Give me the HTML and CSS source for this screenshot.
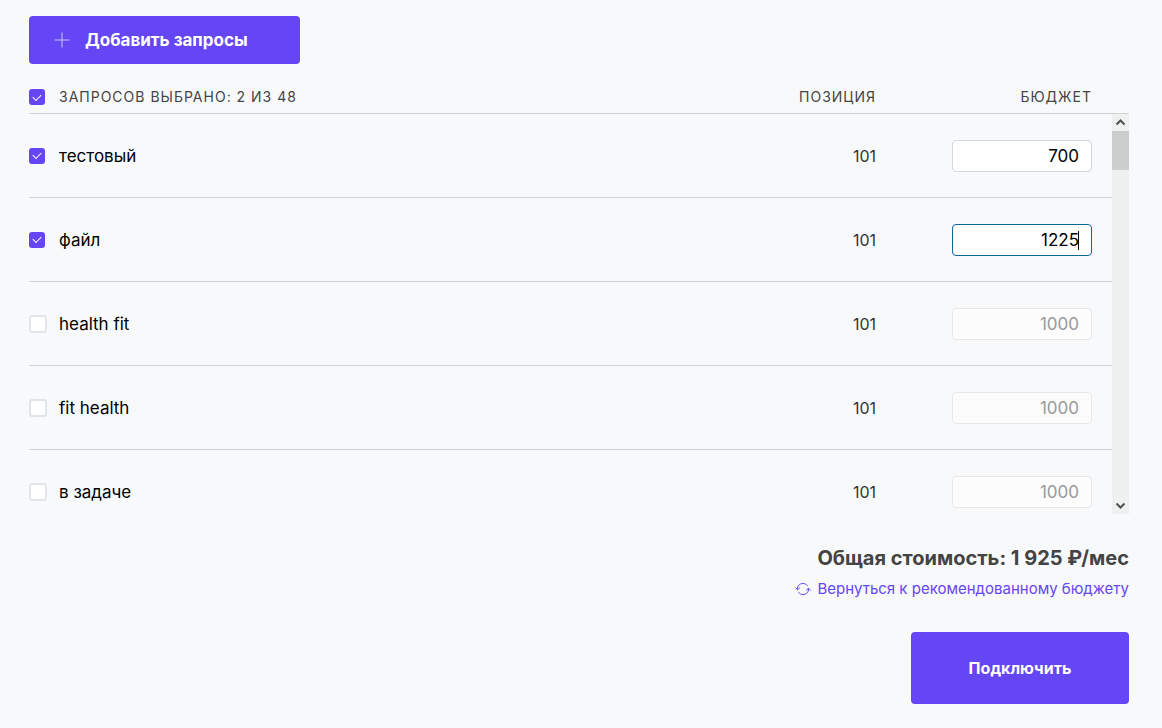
FILE: index.html
```html
<!DOCTYPE html>
<html lang="ru">
<head>
    <meta charset="UTF-8">
    <meta name="viewport" content="width=device-width, initial-scale=1">
    <title>Запросы</title>
    <link rel="stylesheet" href="styles.css">
</head>
<body>
<main class="queries">
    <button type="button" class="button addButton">
        <svg class="plusIcon" width="16" height="16" viewBox="0 0 16 16" aria-hidden="true">
            <path d="M8 0.5V15.5M0.5 8H15.5"/>
        </svg>
        Добавить запросы
    </button>

    <div class="tableWrapper">
        <table class="queryTable">
            <thead>
            <tr>
                <th class="nameCell">
                    <label class="queryLabel"><span class="checkWrapper"><input type="checkbox" class="checkbox" checked></span>Запросов выбрано: 2 из 48</label>
                </th>
                <th class="positionCell">Позиция</th>
                <th class="budgetCell">Бюджет</th>
            </tr>
            </thead>
            <tbody>
            <tr>
                <td class="nameCell"><label class="queryLabel"><span class="checkWrapper"><input type="checkbox" class="checkbox" checked></span>тестовый</label></td>
                <td class="positionCell">101</td>
                <td class="budgetCell"><input type="text" class="budget" value="700" aria-label="Бюджет: тестовый"></td>
            </tr>
            <tr>
                <td class="nameCell"><label class="queryLabel"><span class="checkWrapper"><input type="checkbox" class="checkbox" checked></span>файл</label></td>
                <td class="positionCell">101</td>
                <td class="budgetCell">
                    <div class="activeBudget"><input type="text" class="budget active" value="1225" aria-label="Бюджет: файл"><span class="caret"></span></div>
                </td>
            </tr>
            <tr>
                <td class="nameCell"><label class="queryLabel"><span class="checkWrapper"><input type="checkbox" class="checkbox"></span>health fit</label></td>
                <td class="positionCell">101</td>
                <td class="budgetCell"><input type="text" class="budget" value="1000" aria-label="Бюджет: health fit" disabled></td>
            </tr>
            <tr>
                <td class="nameCell"><label class="queryLabel"><span class="checkWrapper"><input type="checkbox" class="checkbox"></span>fit health</label></td>
                <td class="positionCell">101</td>
                <td class="budgetCell"><input type="text" class="budget" value="1000" aria-label="Бюджет: fit health" disabled></td>
            </tr>
            <tr>
                <td class="nameCell"><label class="queryLabel"><span class="checkWrapper"><input type="checkbox" class="checkbox"></span>в задаче</label></td>
                <td class="positionCell">101</td>
                <td class="budgetCell"><input type="text" class="budget" value="1000" aria-label="Бюджет: в задаче" disabled></td>
            </tr>
            </tbody>
        </table>

        <div class="scrollbar" aria-hidden="true">
            <svg class="arrow" width="17" height="17" viewBox="0 0 17 17"><path d="M4.5 10.5L8.5 6.5L12.5 10.5"/></svg>
            <div class="thumb"></div>
            <svg class="arrow arrowDown" width="17" height="17" viewBox="0 0 17 17"><path d="M4.5 6.5L8.5 10.5L12.5 6.5"/></svg>
        </div>
    </div>

    <footer class="summary">
        <div class="total">Общая стоимость: 1 925 ₽/мес</div>
        <a href="#" class="resetLink">
            <svg class="resetIcon" width="16" height="14" viewBox="0 0 16 14" aria-hidden="true">
                <path d="M2.5 7.5C2.2 3.8 4.6 1.5 8 1.5C10 1.5 11.6 2.4 12.5 3.8M0.5 5.5L2.5 7.8L4.8 5.8"/>
                <path d="M13.5 6.5C13.8 10.2 11.4 12.5 8 12.5C6 12.5 4.4 11.6 3.5 10.2M15.5 8.5L13.5 6.2L11.2 8.2"/>
            </svg>
            Вернуться к рекомендованному бюджету
        </a>
        <button type="button" class="button connectButton">Подключить</button>
    </footer>
</main>
</body>
</html>
```
FILE: styles.css
```css
* {
    box-sizing: border-box;
}
body {
    margin: 0;
    background-color: #f8f9fb;
    color: #000;
    font-family: Inter, "Open Sans", sans-serif;
    font-size: 17px;
    line-height: 24px;
}
.queries {
    padding: 16px 33px 24px 29px;
}
.button {
    border: none;
    border-radius: 4px;
    background-color: #6546f4;
    color: #fff;
    font-family: inherit;
    font-size: 16px;
    font-weight: 700;
    cursor: pointer;
}
.addButton {
    display: flex;
    align-items: center;
    gap: 15px;
    width: 271px;
    height: 48px;
    padding: 0 25px;
    font-size: 17px;
}
.plusIcon {
    fill: none;
    stroke: #c9bffb;
}
.tableWrapper {
    position: relative;
    height: 433px;
    margin-top: 17px;
    padding-right: 17px;
    overflow: hidden;
}
.queryTable {
    width: 100%;
    border-spacing: 0;
}
th, td {
    padding: 0;
    border-bottom: 1px solid #cfd2d6;
    font-weight: 400;
}
th {
    height: 33px;
    color: #444;
    font-size: 14px;
    letter-spacing: 1px;
    text-transform: uppercase;
}
td {
    height: 84px;
}
.nameCell {
    text-align: left;
}
.queryLabel {
    display: flex;
    align-items: center;
}
.checkWrapper {
    display: flex;
    width: 30px;
}
.checkbox {
    appearance: none;
    display: flex;
    align-items: center;
    justify-content: center;
    width: 18px;
    height: 18px;
    margin: 0;
    border: 2px solid #e1e5e9;
    border-radius: 3px;
    background-color: #fff;
}
.checkbox:checked {
    width: 16px;
    height: 16px;
    border: none;
    background-color: #6546f4;
}
.checkbox:checked::after {
    content: "";
    width: 7px;
    height: 4px;
    margin-bottom: 2px;
    border-left: 1px solid #fff;
    border-bottom: 1px solid #fff;
    transform: rotate(-45deg);
}
.positionCell {
    width: 120px;
    text-align: right;
}
td.positionCell {
    color: #333;
    font-size: 16px;
}
.budgetCell {
    width: 236px;
    padding-right: 20px;
    text-align: right;
}
.budget {
    display: block;
    width: 140px;
    height: 32px;
    margin-left: auto;
    padding: 0 12px;
    border: 1px solid #d3d6da;
    border-radius: 4px;
    background-color: #fff;
    color: #000;
    font-family: inherit;
    font-size: 17px;
    text-align: right;
    outline: none;
}
.budget:disabled {
    border-color: #e6e8ea;
    background-color: #fcfcfd;
    color: #999;
}
.budget.active {
    border-color: #0f6499;
}
.activeBudget {
    position: relative;
}
.caret {
    position: absolute;
    top: 7px;
    right: 13px;
    width: 1px;
    height: 19px;
    background-color: #000;
}
.scrollbar {
    position: absolute;
    top: 32px;
    right: 0;
    bottom: 0;
    display: flex;
    flex-direction: column;
    width: 17px;
    border-top: 1px solid #cfd2d6;
    background-color: #eff0f0;
}
.arrow {
    fill: none;
    stroke: #505050;
    stroke-width: 2;
}
.arrowDown {
    margin-top: auto;
}
.thumb {
    height: 39px;
    background-color: #cccdcd;
}
.summary {
    display: flex;
    flex-direction: column;
    align-items: flex-end;
    padding-top: 32px;
}
.total {
    color: #444;
    font-size: 20px;
    font-weight: 700;
}
.resetLink {
    display: flex;
    align-items: center;
    gap: 6px;
    margin-top: 7px;
    color: #6546f4;
    font-size: 15px;
    text-decoration: none;
}
.resetIcon {
    fill: none;
    stroke: #6546f4;
}
.connectButton {
    width: 218px;
    height: 72px;
    margin-top: 31px;
}
```
